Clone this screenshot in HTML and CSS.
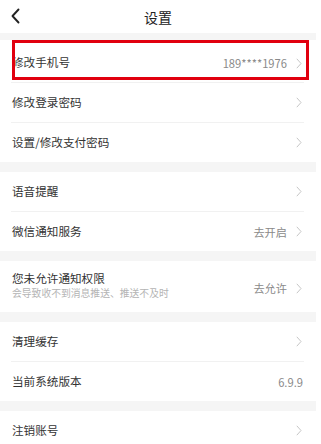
FILE: index.html
```html
<!DOCTYPE html>
<html lang="zh-CN">
<head>
<meta charset="utf-8">
<title>设置</title>
<link rel="stylesheet" href="styles.css">
</head>
<body>
<div class="page">
  <header class="nav">
    <svg class="back" width="10" height="16" viewBox="0 0 10 16"><path d="M8.5 1.5 L2.5 8 L8.5 14.5" fill="none" stroke="#222" stroke-width="1.9" stroke-linecap="round" stroke-linejoin="round"/></svg>
    <div class="title">设置</div>
  </header>
  <div class="band band-top"></div>
  <section class="group">
    <div class="cell cell-first"><span class="label">修改手机号</span><span class="value">189****1976</span><svg class="chev" width="6" height="11" viewBox="0 0 6 11"><path d="M0.8 0.8 L5 5.5 L0.8 10.2" fill="none" stroke="#c6c6c6" stroke-width="1"/></svg></div>
    <div class="cell"><span class="label">修改登录密码</span><svg class="chev" width="6" height="11" viewBox="0 0 6 11"><path d="M0.8 0.8 L5 5.5 L0.8 10.2" fill="none" stroke="#c6c6c6" stroke-width="1"/></svg></div>
    <div class="cell"><span class="label">设置/修改支付密码</span><svg class="chev" width="6" height="11" viewBox="0 0 6 11"><path d="M0.8 0.8 L5 5.5 L0.8 10.2" fill="none" stroke="#c6c6c6" stroke-width="1"/></svg></div>
  </section>
  <div class="band"></div>
  <section class="group">
    <div class="cell"><span class="label">语音提醒</span><svg class="chev" width="6" height="11" viewBox="0 0 6 11"><path d="M0.8 0.8 L5 5.5 L0.8 10.2" fill="none" stroke="#c6c6c6" stroke-width="1"/></svg></div>
    <div class="cell"><span class="label">微信通知服务</span><span class="value">去开启</span><svg class="chev" width="6" height="11" viewBox="0 0 6 11"><path d="M0.8 0.8 L5 5.5 L0.8 10.2" fill="none" stroke="#c6c6c6" stroke-width="1"/></svg></div>
  </section>
  <div class="band"></div>
  <section class="group">
    <div class="cell cell-tall">
      <div class="stack"><span class="label">您未允许通知权限</span><span class="sub">会导致收不到消息推送、推送不及时</span></div>
      <span class="value value-low">去允许</span><svg class="chev chev-low" width="6" height="11" viewBox="0 0 6 11"><path d="M0.8 0.8 L5 5.5 L0.8 10.2" fill="none" stroke="#c6c6c6" stroke-width="1"/></svg>
    </div>
  </section>
  <div class="band"></div>
  <section class="group">
    <div class="cell"><span class="label">清理缓存</span><svg class="chev" width="6" height="11" viewBox="0 0 6 11"><path d="M0.8 0.8 L5 5.5 L0.8 10.2" fill="none" stroke="#c6c6c6" stroke-width="1"/></svg></div>
    <div class="cell"><span class="label">当前系统版本</span><span class="value value-end">6.9.9</span></div>
  </section>
  <div class="band"></div>
  <section class="group">
    <div class="cell"><span class="label">注销账号</span><svg class="chev" width="6" height="11" viewBox="0 0 6 11"><path d="M0.8 0.8 L5 5.5 L0.8 10.2" fill="none" stroke="#c6c6c6" stroke-width="1"/></svg></div>
  </section>
  <div class="highlight"></div>
</div>
</body>
</html>
```

FILE: styles.css
```css
html, body {
  margin: 0;
  padding: 0;
  background: #ffffff;
}
body {
  font-family: "Noto Sans CJK SC", "Noto Sans", sans-serif;
  color: #333333;
  overflow: hidden;
}
.page {
  position: relative;
  width: 316px;
  background: #ffffff;
}
.nav {
  height: 33px;
  display: flex;
  align-items: center;
  justify-content: center;
  position: relative;
}
.back {
  position: absolute;
  left: 10px;
  top: 8px;
}
.title {
  font-size: 14px;
  color: #222222;
  line-height: 1;
}
.band {
  height: 10px;
  background: #f5f5f5;
}
.band-top {
  height: 7px;
}
.group {
  background: #ffffff;
}
.cell {
  display: flex;
  align-items: center;
  height: 39px;
  margin: 0 12px 0 11px;
  padding: 0 2px 0 1px;
}
.cell + .cell {
  border-top: 1px solid #f1f1f1;
}
.cell-first {
  height: 38px;
  padding-top: 4px;
}
.cell-tall {
  height: 51px;
}
.label {
  font-size: 11.6px;
  color: #333333;
  line-height: 1.2;
}
.stack {
  display: flex;
  flex-direction: column;
  gap: 2px;
  margin-top: -2px;
}
.sub {
  font-size: 9.8px;
  color: #b4b4b4;
  line-height: 1.2;
}
.value {
  margin-left: auto;
  font-size: 11.2px;
  color: #8a8a8a;
  margin-right: 9px;
}
.value-end {
  margin-right: -1px;
}
.value-low {
  margin-top: 3px;
}
.chev {
  display: block;
  flex: none;
}
.label + .chev {
  margin-left: auto;
}
.chev-low {
  margin-top: 3px;
}
.highlight {
  position: absolute;
  left: 12px;
  top: 40px;
  width: 297px;
  height: 40px;
  box-sizing: border-box;
  border: 3px solid #e1000f;
}
```
